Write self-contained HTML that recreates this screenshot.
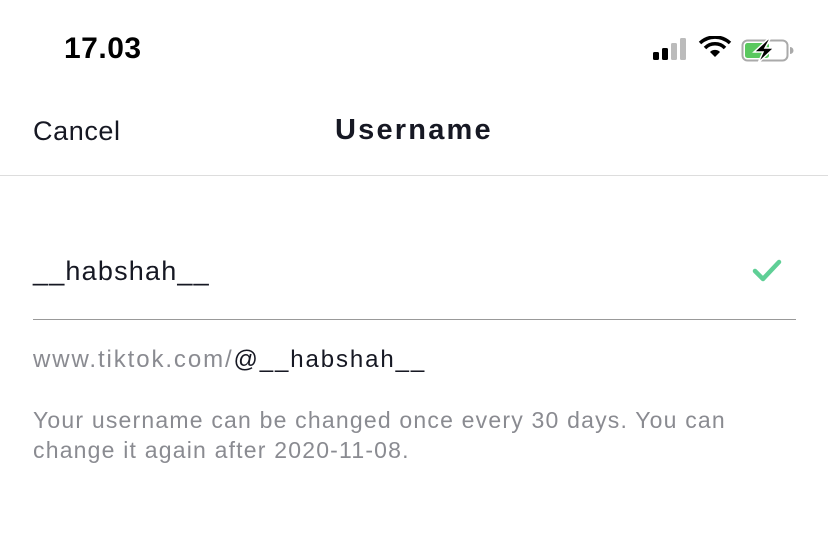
<!DOCTYPE html>
<html><head><meta charset="utf-8"><style>
*{margin:0;padding:0;box-sizing:border-box}
body{width:828px;height:540px;background:#fff;font-family:"Liberation Sans",sans-serif;position:relative;overflow:hidden;color:#161823}
.a{position:absolute;white-space:nowrap}
</style></head><body>
<div class="a" style="left:64px;top:32px;font-size:30px;font-weight:bold;color:#000;letter-spacing:0.5px">17.03</div>
<svg class="a" style="left:650px;top:36px" width="150" height="30" viewBox="0 0 150 30">
<rect x="3" y="16" width="6" height="8" rx="1.5" fill="#000"/>
<rect x="12" y="12" width="6" height="12" rx="1.5" fill="#000"/>
<rect x="21" y="7" width="6" height="17" rx="1.5" fill="#bbb"/>
<rect x="30" y="2" width="6" height="22" rx="1.5" fill="#bbb"/>
<path d="M50 7 a22 22 0 0 1 30 0" stroke="#000" stroke-width="3.5" fill="none"/>
<path d="M55 12 a14 14 0 0 1 20 0" stroke="#000" stroke-width="3.5" fill="none"/>
<path d="M60 16 l5 5 l5 -5 a7 7 0 0 0 -10 0z" fill="#000"/>
<rect x="92.5" y="4.5" width="45" height="20" rx="5" fill="none" stroke="#aaa" stroke-width="2"/>
<rect x="95" y="7" width="24" height="15" rx="2.5" fill="#5ac85f"/>
<path d="M140 11 v7 a3 3 0 0 0 0 -7z" fill="#aaa"/>
<path d="M118 3 L104 16 H113 L108 27 L124 12 H115 L120 3z" fill="#000" stroke="#fff" stroke-width="1.5"/>
</svg>
<div class="a" style="left:33px;top:116px;font-size:27px;color:#161823;letter-spacing:0.6px">Cancel</div>
<div class="a" style="left:335px;top:114px;font-size:29px;font-weight:bold;letter-spacing:2.2px">Username</div>
<div class="a" style="left:0;top:175px;width:828px;height:1px;background:#ddd"></div>
<div class="a" style="left:33px;top:256px;font-size:27px;letter-spacing:1.2px">__habshah__</div>
<svg class="a" style="left:752px;top:258px" width="30" height="26" viewBox="0 0 30 26"><path d="M3 13 L11 21 L27 4" stroke="#5fcf96" stroke-width="4.5" fill="none" stroke-linecap="round" stroke-linejoin="round"/></svg>
<div class="a" style="left:33px;top:319px;width:763px;height:1px;background:#999"></div>
<div class="a" style="left:33px;top:346px;font-size:24px;color:#8a8b91;letter-spacing:1.9px">www.tiktok.com/<span style="color:#161823">@__habshah__</span></div>
<div class="a" style="left:33px;top:405px;font-size:23px;color:#8a8b91;line-height:30px;letter-spacing:1.2px">Your username can be changed once every 30 days. You can<br>change it again after 2020-11-08.</div>
</body></html>
